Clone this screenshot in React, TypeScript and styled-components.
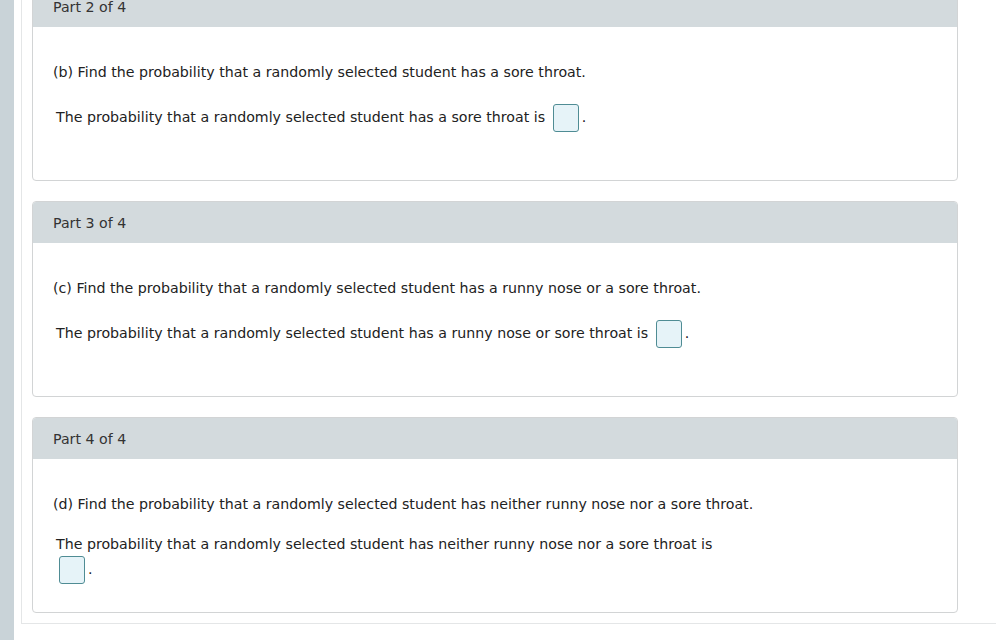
import styled, { createGlobalStyle } from 'styled-components'

const GlobalStyle = createGlobalStyle`
  body {
    margin: 0;
    background: #ffffff;
    font-family: "DejaVu Sans", Verdana, sans-serif;
    color: #222222;
    overflow: hidden;
  }
`

type Part = {
  label: string
  question: string
  answer: string
}

const parts: Part[] = [
  {
    label: 'Part 2 of 4',
    question: '(b) Find the probability that a randomly selected student has a sore throat.',
    answer: 'The probability that a randomly selected student has a sore throat is',
  },
  {
    label: 'Part 3 of 4',
    question: '(c) Find the probability that a randomly selected student has a runny nose or a sore throat.',
    answer: 'The probability that a randomly selected student has a runny nose or sore throat is',
  },
  {
    label: 'Part 4 of 4',
    question: '(d) Find the probability that a randomly selected student has neither runny nose nor a sore throat.',
    answer: 'The probability that a randomly selected student has neither runny nose nor a sore throat is',
  },
]

function App() {
  return (
    <StyledPage>
      <GlobalStyle />
      <StyledSideBar />
      <StyledMain>
        {parts.map(part => (
          <StyledCard key={part.label}>
            <StyledHeader>{part.label}</StyledHeader>
            <StyledBody>
              <StyledQuestion>{part.question}</StyledQuestion>
              <StyledAnswer>
                {part.answer} <StyledInput aria-label='answer' />.
              </StyledAnswer>
            </StyledBody>
          </StyledCard>
        ))}
      </StyledMain>
    </StyledPage>
  )
}

export default App

const StyledPage = styled.div`
  display: flex;
  align-items: flex-start;
  min-height: 100vh;
`

const StyledSideBar = styled.div`
  flex: 0 0 14px;
  align-self: stretch;
  background: #c9d3d8;
`

const StyledMain = styled.div`
  flex: 1;
  margin: -15px 0 0 7px;
  padding: 0 38px 10px 10px;
  border-left: 1px solid #e4e6e7;
  border-bottom: 1px solid #e4e6e7;
  display: flex;
  flex-direction: column;
  gap: 20px;
`

const StyledCard = styled.div`
  border: 1px solid #d2d4d5;
  border-radius: 4px;
  background: #ffffff;
`

const StyledHeader = styled.div`
  height: 41px;
  display: flex;
  align-items: center;
  padding-left: 20px;
  background: #d3dadd;
  border-radius: 3px 3px 0 0;
  font-size: 14.2px;
  color: #333333;
`

const StyledBody = styled.div`
  min-height: 153px;
  box-sizing: border-box;
  padding: 35px 20px 0;
  font-size: 14.2px;
`

const StyledQuestion = styled.p`
  margin: 0;
  line-height: 20px;
`

const StyledAnswer = styled.div`
  margin-top: 20px;
  padding-left: 3px;
  max-width: 662px;
  line-height: 20px;
`

const StyledInput = styled.span`
  display: inline-block;
  width: 24px;
  height: 26px;
  margin: 2px 3px 2px 3px;
  vertical-align: middle;
  background: #e6f3f8;
  border: 1px solid #4f8c94;
  border-radius: 3px;
`
